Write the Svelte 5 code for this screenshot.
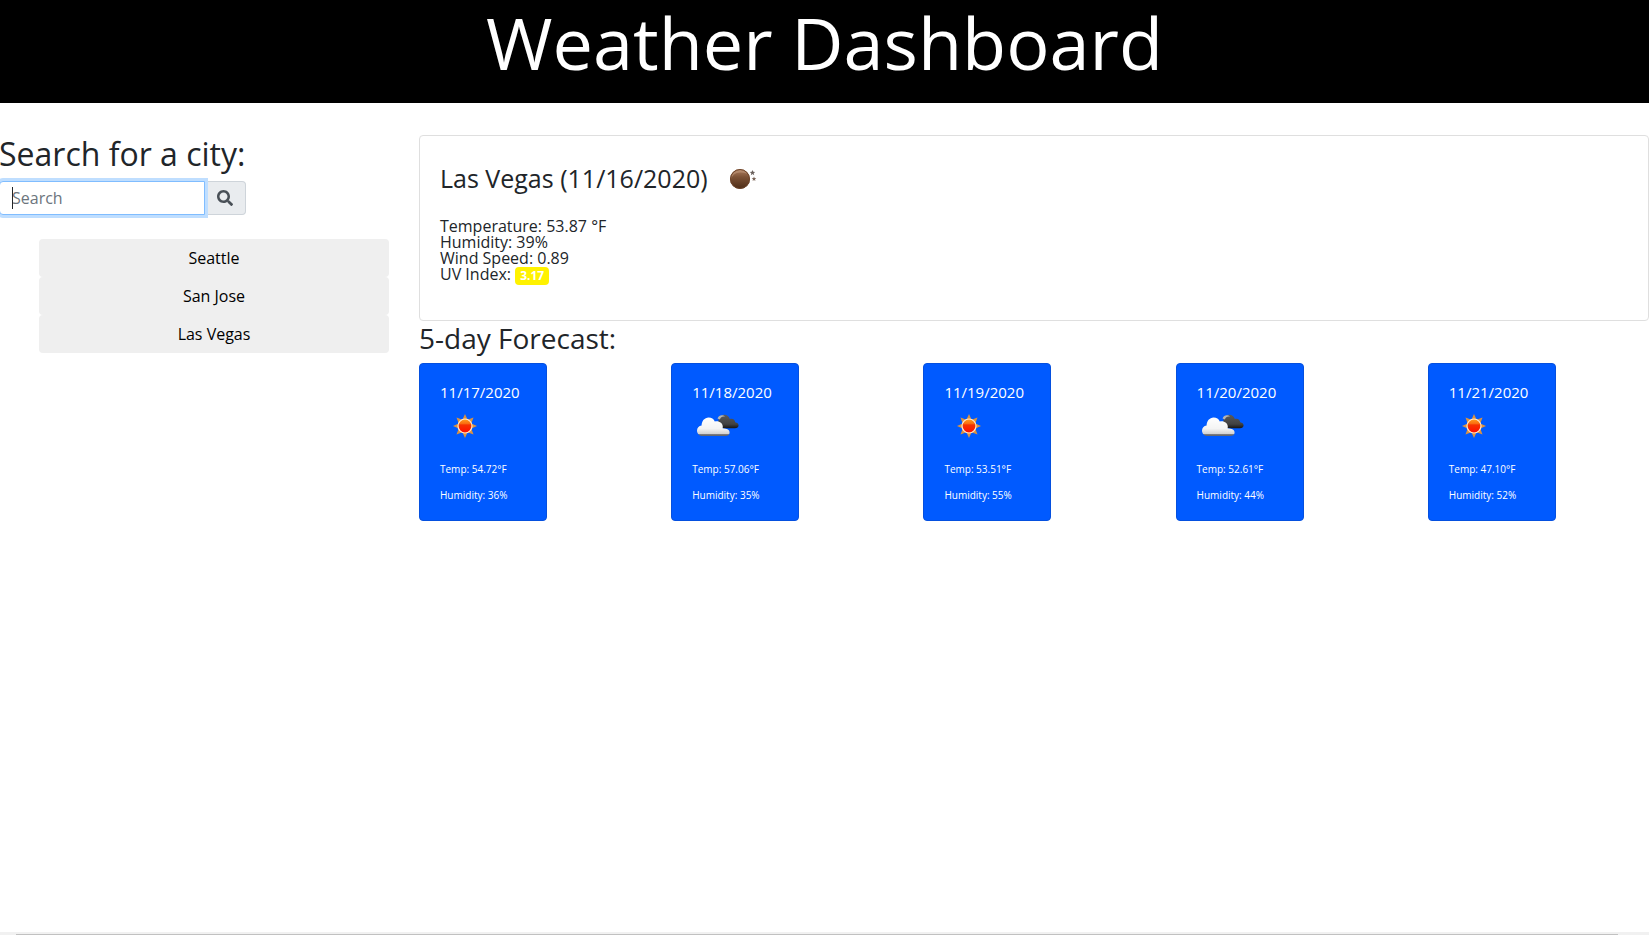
<script>
  const cities = ['Seattle', 'San Jose', 'Las Vegas'];
  const forecast = [
    { date: '11/17/2020', icon: 'sun', temp: '54.72', humidity: 36 },
    { date: '11/18/2020', icon: 'cloud', temp: '57.06', humidity: 35 },
    { date: '11/19/2020', icon: 'sun', temp: '53.51', humidity: 55 },
    { date: '11/20/2020', icon: 'cloud', temp: '52.61', humidity: 44 },
    { date: '11/21/2020', icon: 'sun', temp: '47.10', humidity: 52 }
  ];
  let query = $state('');
</script>

<svg class="defs" aria-hidden="true">
  <defs>
    <linearGradient id="sunFill" x1="0" y1="0" x2="0" y2="1">
      <stop offset="0" stop-color="#ffa01e" />
      <stop offset="0.34" stop-color="#fa6a10" />
      <stop offset="0.42" stop-color="#f53200" />
      <stop offset="1" stop-color="#ff0c00" />
    </linearGradient>
    <linearGradient id="moonFill" x1="0" y1="0" x2="0" y2="1">
      <stop offset="0" stop-color="#b08062" />
      <stop offset="0.4" stop-color="#7d5236" />
      <stop offset="1" stop-color="#4c2c17" />
    </linearGradient>
    <linearGradient id="cloudFill" x1="0" y1="0" x2="0" y2="1">
      <stop offset="0" stop-color="#ffffff" />
      <stop offset="0.6" stop-color="#f4f4f4" />
      <stop offset="0.88" stop-color="#d2d2d2" />
      <stop offset="0.92" stop-color="#77777c" />
      <stop offset="1" stop-color="#5c6068" />
    </linearGradient>
    <linearGradient id="darkFill" x1="0" y1="0" x2="0" y2="1">
      <stop offset="0" stop-color="#5a5a5a" />
      <stop offset="0.7" stop-color="#414141" />
      <stop offset="1" stop-color="#161616" />
    </linearGradient>
  </defs>
</svg>

<div class="page">
  <header><h1>Weather Dashboard</h1></header>

  <main>
    <aside>
      <form onsubmit={(e) => e.preventDefault()}>
        <h2><label for="city">Search for a city:</label></h2>
        <div class="group">
          <div class="field">
            <input id="city" type="text" placeholder="Search" bind:value={query} />
          </div>
          <button type="submit" class="go" aria-label="Search">
            <svg width="16" height="16" viewBox="0 0 512 512" fill="currentColor" aria-hidden="true">
              <path d="M505 442.7L405.3 343c-4.500-4.500-10.600-7-17-7H372c27.600-35.300 44-79.700 44-128C416 93.100 322.900 0 208 0S0 93.100 0 208s93.100 208 208 208c48.300 0 92.700-16.400 128-44v16.300c0 6.400 2.500 12.500 7 17l99.700 99.700c9.400 9.400 24.600 9.400 33.900 0l28.300-28.300c9.400-9.400 9.400-24.600.1-34zM208 336c-70.700 0-128-57.200-128-128 0-70.700 57.200-128 128-128 70.700 0 128 57.200 128 128 0 70.700-57.200 128-128 128z" />
            </svg>
          </button>
        </div>
      </form>
      <ul>
        {#each cities as city}
          <li><button type="button">{city}</button></li>
        {/each}
      </ul>
    </aside>

    <div class="content">
      <section class="card today">
        <div class="heading">
          <h4>Las Vegas (11/16/2020)</h4>
          <svg width="50" height="46" viewBox="0 2 50 46" aria-hidden="true">
            <circle cx="24" cy="25" r="10" fill="url(#moonFill)" />
            <path d="M15 25a9 9 0 0 1 16-5.500q-9-2.500-13 1-2 2-3 4.500z" fill="#c39a7e" opacity="0.55" />
            <circle cx="24" cy="25" r="9.500" fill="none" stroke="#6e452b" stroke-width="1" />
            <path d="M36.500 16l.8 1.800 1.900.1-1.500 1.300.5 2-1.700-1.100-1.700 1.100.5-2-1.500-1.300 1.900-.1z" fill="#6b625e" />
            <path d="M38 22.600l.6 1.500 1.700.1-1.300 1.100.4 1.700-1.400-.9-1.400.9.4-1.700-1.300-1.100 1.700-.1z" fill="#7a6458" />
          </svg>
        </div>
        <p>Temperature: 53.87 °F</p>
        <p>Humidity: 39%</p>
        <p>Wind Speed: 0.89</p>
        <p>UV Index: <span class="badge">3.17</span></p>
      </section>

      <h3>5-day Forecast:</h3>
      <div class="days">
        {#each forecast as day}
          <article class="card day">
            <h5>{day.date}</h5>
            <svg width="50" height="50" viewBox="0 0 50 50" aria-hidden="true">
              {#if day.icon === 'sun'}
                <path d="M25 13l2.600 5.700 5.900-2.200-2.200 5.900 5.700 2.600-5.700 2.600 2.200 5.900-5.900-2.200-2.600 5.700-2.600-5.700-5.900 2.200 2.200-5.900-5.700-2.600 5.700-2.600-2.200-5.900 5.900 2.200z" fill="#dc9340" />
                <circle cx="25" cy="25" r="7" fill="url(#sunFill)" stroke="#ffe9d2" stroke-width="1.200" />
              {:else}
                <path d="M26 23c0-4 1.500-8 5-9 3-.8 6 1 6.800 4 3-1.200 5.200.8 5.400 3.200 2 .3 3.400 1.500 3.400 3 0 2-1.600 3-3.600 3H30z" fill="url(#darkFill)" />
                <path d="M25.500 17.500c1-2.500 3-3.500 5-3.200 1.500.2 2 .8 2.400 1.500-2.400-.6-4 .2-5 2.600z" fill="#b4b4b4" />
                <path d="M11 35c-3.500 0-6-2.300-6-5.300 0-2.700 1.800-4.700 4.600-5.100 0-4.500 3-8.100 7-8.100 3 0 5.200 1.600 6.200 4 4-1 8 1.400 8 5.300 0 .8-.1 1-.2 1.400 4.600.3 7 1.500 7 4.200 0 2.200-1.800 3.600-4.200 3.600z" fill="url(#cloudFill)" />
              {/if}
            </svg>
            <p>Temp: {day.temp}°F</p>
            <p>Humidity: {day.humidity}%</p>
          </article>
        {/each}
      </div>
    </div>
  </main>

  <div class="track"><div class="thumb"></div></div>
</div>

<style>
  :global(body) {
    margin: 0;
    overflow-x: hidden;
    background: #fff;
  }
  .page,
  .page * {
    box-sizing: border-box;
  }
  .defs {
    position: absolute;
    width: 0;
    height: 0;
  }
  .page {
    display: flex;
    flex-direction: column;
    min-height: 100vh;
    font-family: 'Open Sans', 'Noto Sans', sans-serif;
    font-size: 16px;
    line-height: 24px;
    color: #212529;
  }
  h1, h2, h3, h4, h5, p, ul {
    margin: 0;
    padding: 0;
    font-weight: 400;
  }
  header {
    background: #000;
    color: #fff;
    text-align: center;
    padding-bottom: 18px;
  }
  h1 {
    font-size: 72px;
    line-height: 85px;
  }
  main {
    flex: 1;
    display: grid;
    grid-template-columns: 389px minmax(0, 1fr);
    gap: 30px;
    padding-top: 32px;
  }
  form {
    width: 247px;
    margin-left: -1px;
  }
  h2 {
    font-size: 32px;
    line-height: 38px;
    margin-bottom: 8px;
    white-space: nowrap;
  }
  .group {
    display: flex;
    height: 34px;
  }
  .field {
    position: relative;
    flex: 1;
    display: flex;
  }
  .field::before {
    content: '';
    position: absolute;
    left: 13px;
    top: 6px;
    width: 1px;
    height: 22px;
    background: #212529;
  }
  input {
    width: 100%;
    min-width: 0;
    padding: 0 12px;
    border: 1px solid #80bdff;
    border-radius: 4px 0 0 4px;
    box-shadow: 0 0 0 3px #bfdeff;
    outline: none;
    background: #fff;
    color: #495057;
    font: inherit;
  }
  input::placeholder {
    color: #6c757d;
    opacity: 1;
  }
  .go {
    width: 41px;
    padding: 0;
    border: 1px solid #ced4da;
    border-left: 0;
    border-radius: 0 4px 4px 0;
    background: #e9ecef;
    color: #495057;
    display: flex;
    align-items: center;
    justify-content: center;
  }
  ul {
    list-style: none;
    padding: 24px 0 0 39px;
  }
  li {
    display: flex;
  }
  li button {
    flex: 1;
    height: 38px;
    border: 0;
    border-radius: 4px;
    background: #efefef;
    color: #000;
    font: inherit;
  }
  .card {
    border: 1px solid #dfdfdf;
    border-radius: 4px;
    padding: 20px;
  }
  .today {
    padding-bottom: 38px;
  }
  .today p {
    line-height: 16px;
  }
  .heading {
    display: flex;
    align-items: center;
    gap: 8px;
    margin-bottom: 16px;
  }
  h4 {
    font-size: 25px;
    line-height: 30px;
    padding-bottom: 2px;
  }
  .badge {
    display: inline-block;
    padding: 3px 5px;
    border-radius: 4px;
    background: #fff200;
    color: #fff;
    font-size: 12px;
    font-weight: 700;
    line-height: 12px;
    margin: -3px 0;
  }
  h3 {
    font-size: 28px;
    line-height: 34px;
    margin-bottom: 8px;
  }
  .days {
    display: grid;
    grid-template-columns: repeat(5, minmax(0, 1fr));
    gap: 31px;
  }
  .day {
    width: 128px;
    background: #005aff;
    border-color: #0550df;
    color: #fff;
  }
  h5 {
    font-size: 15px;
    line-height: 17px;
  }
  .day svg {
    display: block;
    margin-bottom: 13px;
  }
  .day p {
    font-size: 10px;
    line-height: 10px;
  }
  .day p + p {
    margin-top: 16px;
  }
  .track {
    background: #f1f1f1;
    padding: 2px 31px 0 16px;
  }
  .thumb {
    height: 1px;
    background: #c1c1c1;
  }
</style>
